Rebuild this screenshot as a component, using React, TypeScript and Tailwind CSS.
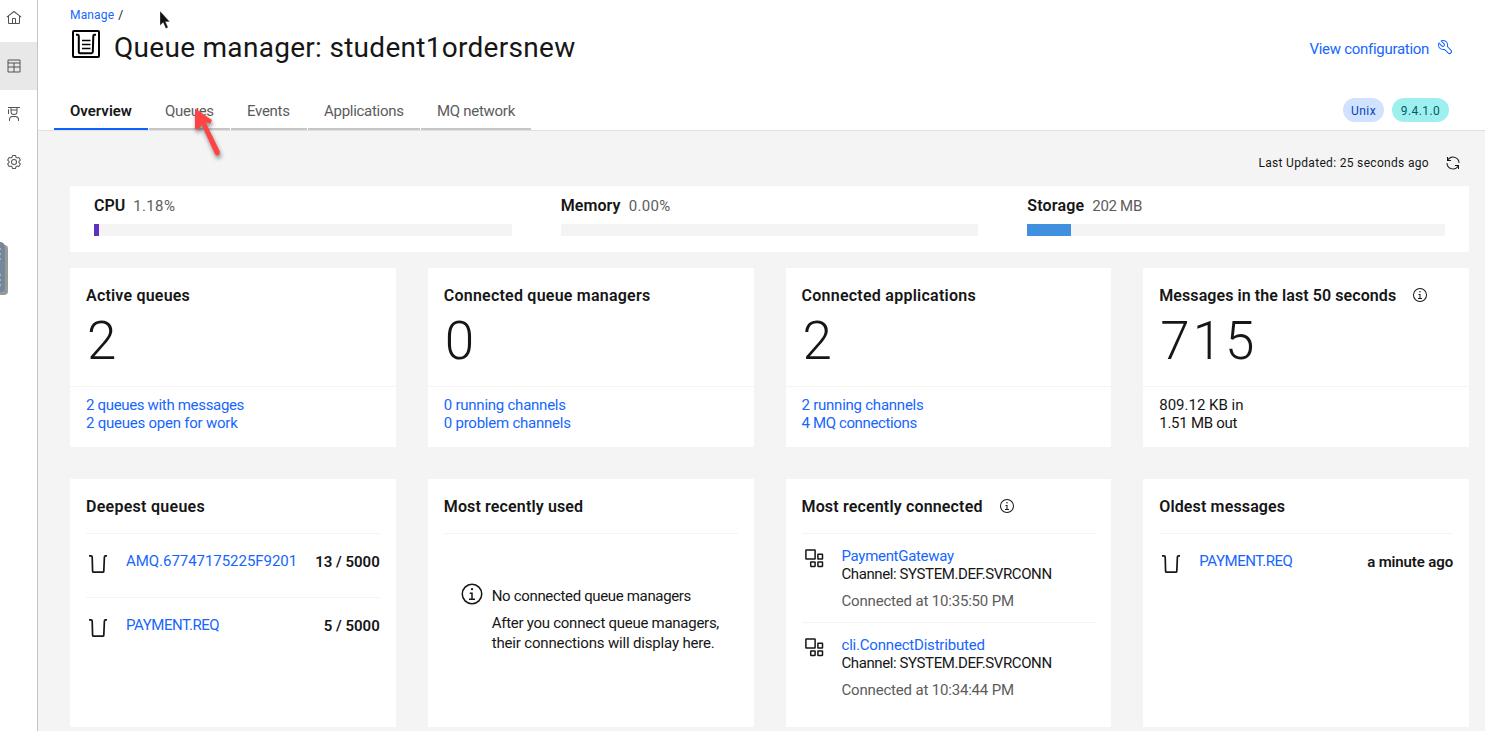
import type { ReactNode } from "react";

const link = "text-[#1666fe]";

function Carbon({ d, size = "size-4" }: { d: string[]; size?: string }) {
  return (
    <svg viewBox="0 0 32 32" fill="currentColor" className={`${size} shrink-0`}>
      {d.map((p) => (
        <path key={p} d={p} />
      ))}
    </svg>
  );
}

const HOME = [
  "M16.6123,2.2138a1.01,1.01,0,0,0-1.2427,0L1,13.4194l1.2427,1.5717L4,13.6208V26a2.0041,2.0041,0,0,0,2,2H26a2.0037,2.0037,0,0,0,2-2V13.63L29.7573,15,31,13.4282ZM18,26H14V18h4Zm2,0V18a2.0023,2.0023,0,0,0-2-2H14a2.002,2.002,0,0,0-2,2v8H6V12.0615l10-7.79,10,7.8005V26Z",
];
const TABLE = [
  "M27 3H5a2 2 0 0 0-2 2v22a2 2 0 0 0 2 2h22a2 2 0 0 0 2-2V5a2 2 0 0 0-2-2Zm0 2v4H5V5Zm-12 12H5v-6h10Zm2-6h10v6H17Zm-2 8v8H5v-8Zm2 8v-8h10v8Z",
];
const EDUCATION = [
  "M26,30H24V27a5.0059,5.0059,0,0,0-5-5H13a5.0059,5.0059,0,0,0-5,5v3H6V27a7.0082,7.0082,0,0,1,7-7h6a7.0082,7.0082,0,0,1,7,7Z",
  "M5,6A1,1,0,0,0,4,7v9H6V7A1,1,0,0,0,5,6Z",
  "M4,2V4H9v7a7,7,0,0,0,14,0V4h5V2Zm7,2H21V7H11Zm5,12a5,5,0,0,1-5-5V9H21v2A5,5,0,0,1,16,16Z",
];
const SETTINGS = [
  "M27,16.76c0-.25,0-.5,0-.76s0-.51,0-.77l1.92-1.68A2,2,0,0,0,29.3,11L26.94,7a2,2,0,0,0-1.73-1,2,2,0,0,0-.64.1l-2.43.82a11.35,11.35,0,0,0-1.31-.75l-.51-2.52a2,2,0,0,0-2-1.61H13.64a2,2,0,0,0-2,1.61l-.51,2.52a11.48,11.48,0,0,0-1.32.75L7.43,6.06A2,2,0,0,0,6.79,6,2,2,0,0,0,5.06,7L2.7,11a2,2,0,0,0,.41,2.51L5,15.24c0,.25,0,.5,0,.76s0,.51,0,.77L3.11,18.45A2,2,0,0,0,2.7,21L5.06,25a2,2,0,0,0,1.73,1,2,2,0,0,0,.64-.1l2.43-.82a11.35,11.35,0,0,0,1.31.75l.51,2.52a2,2,0,0,0,2,1.61h4.72a2,2,0,0,0,2-1.61l.51-2.52a11.48,11.48,0,0,0,1.32-.75l2.42.82a2,2,0,0,0,.64.1,2,2,0,0,0,1.73-1L29.3,21a2,2,0,0,0-.41-2.51ZM25.21,24l-3.43-1.16a8.86,8.86,0,0,1-2.71,1.57L18.36,28H13.64l-.71-3.55a9.36,9.36,0,0,1-2.7-1.57L6.79,24,4.43,20l2.72-2.4a8.9,8.9,0,0,1,0-3.13L4.43,12,6.79,8l3.43,1.16a8.86,8.86,0,0,1,2.71-1.57L13.64,4h4.72l.71,3.55a9.36,9.36,0,0,1,2.7,1.57L25.21,8,27.57,12l-2.72,2.4a8.9,8.9,0,0,1,0,3.13L27.57,20Z",
  "M16,22a6,6,0,1,1,6-6A5.94,5.94,0,0,1,16,22Zm0-10a3.91,3.91,0,0,0-4,4,3.91,3.91,0,0,0,4,4,3.91,3.91,0,0,0,4-4A3.91,3.91,0,0,0,16,12Z",
];
const TOOLS = [
  "M12.1,2A9.8,9.8,0,0,0,6.7,3.6L13.1,10a2.1,2.1,0,0,1,.2,3,2.1,2.1,0,0,1-3-.2L3.7,6.4A9.84,9.84,0,0,0,2,12.1,10.14,10.14,0,0,0,12.1,22.2a10.9,10.9,0,0,0,2.6-.3l6.7,6.7a5,5,0,0,0,7.1-7.1l-6.7-6.7a10.9,10.9,0,0,0,.3-2.6A10,10,0,0,0,12.1,2Zm8,10.1a7.61,7.61,0,0,1-.3,2.1l-.3,1.1.8.8,6.7,6.7a2.88,2.88,0,0,1,.9,2.1A2.72,2.72,0,0,1,27,27a2.9,2.9,0,0,1-4.2,0l-6.7-6.7-.8-.8-1.1.3a7.61,7.61,0,0,1-2.1.3,8.27,8.27,0,0,1-5.7-2.3A7.63,7.63,0,0,1,4,12.1a8.33,8.33,0,0,1,.3-2.2l4.4,4.4a4.14,4.14,0,0,0,5.9.2,4.14,4.14,0,0,0-.2-5.9L10,4.2a6.45,6.45,0,0,1,2-.3,8.27,8.27,0,0,1,5.7,2.3A8.49,8.49,0,0,1,20.1,12.1Z",
];
const RENEW = [
  "M12 10H6.78A11 11 0 0 1 27 16h2A13 13 0 0 0 6 7.68V4H4v8h8Z",
  "M20 22h5.22A11 11 0 0 1 5 16H3a13 13 0 0 0 23 8.32V28h2v-8h-8Z",
];
const INFO = [
  "M17 22V14H13v2h2v6H12v2h8V22Z",
  "M16 8a1.5 1.5 0 1 0 1.5 1.5A1.5 1.5 0 0 0 16 8Z",
  "M16,30A14,14,0,1,1,30,16,14,14,0,0,1,16,30ZM16,4A12,12,0,1,0,28,16,12,12,0,0,0,16,4Z",
];

function QueueIcon() {
  return (
    <svg viewBox="0 0 24 24" fill="none" stroke="#161616" strokeWidth="1.7" className="mt-[17px] size-6 shrink-0">
      <path d="M3 4.800h2q1.200 0 1.200 1.200l.4 14.200q0 1 1 1h9.200q1 0 1-1l.6-14.200q0-1.200 1.200-1.200h1.400" />
    </svg>
  );
}

function AppIcon() {
  return (
    <svg viewBox="0 0 24 24" fill="none" stroke="#161616" strokeWidth="1.500" className="mt-3 size-6 shrink-0">
      <rect x="3.900" y="3.900" width="9.200" height="9.200" rx=".3" />
      <rect x="15.900" y="8.300" width="4.600" height="4.800" rx=".3" />
      <rect x="8.700" y="16" width="4.400" height="4.400" rx=".3" />
      <rect x="15.900" y="16" width="4.600" height="4.400" rx=".3" />
    </svg>
  );
}

function Meter({ name, value, track, valueTrack, fill, color }: { name: string; value: string; track: string; valueTrack: string; fill: number; color: string }) {
  return (
    <div>
      <div className="flex h-[38px] items-center gap-2 pt-0.5 leading-5">
        <span className={`text-base font-semibold ${track}`}>{name}</span>
        <span className={`text-[15px] text-[#5c5c5c] ${valueTrack}`}>{value}</span>
      </div>
      <div className="h-3 bg-[#f4f4f4]">
        <div className={`h-3 ${color}`} style={{ width: fill }} />
      </div>
    </div>
  );
}

function CardTitle({ title, track, info }: { title: string; track: string; info?: boolean }) {
  return (
    <h2 className={`flex h-[23px] items-start text-base leading-[23px] font-semibold ${track}`}>
      {title}
      {info && <span className="mt-[3px] ml-4 flex"><Carbon d={INFO} /></span>}
    </h2>
  );
}

function Stat({ title, track, value, info, children }: { title: string; track: string; value: string; info?: boolean; children: ReactNode }) {
  return (
    <section className="h-[179px] bg-white">
      <div className="h-[118px] px-4 pt-4">
        <CardTitle title={title} track={track} info={info} />
        <p className="h-[68px] pl-px text-[53px] leading-[68px] font-light tracking-[3px]">{value}</p>
      </div>
      <div className="border-t border-[#f4f4f4] px-4 pt-[9px] text-[15px] leading-[18px]">{children}</div>
    </section>
  );
}

function Panel({ title, track, info, children }: { title: string; track: string; info?: boolean; children: ReactNode }) {
  return (
    <section className="h-[248px] bg-white px-4 pt-4">
      <CardTitle title={title} track={track} info={info} />
      <div className="mt-[15px]">{children}</div>
    </section>
  );
}

function QueueRow({ name, track, value, valueTrack = "" }: { name: string; track: string; value: string; valueTrack?: string }) {
  return (
    <div className="flex h-16 border-t border-[#f4f4f4]">
      <QueueIcon />
      <span className={`mt-[17px] ml-4 text-[15px] leading-5 ${link} ${track}`}>{name}</span>
      <span className={`mt-[18px] ml-auto text-[15px] leading-5 font-semibold ${valueTrack}`}>{value}</span>
    </div>
  );
}

function AppRow({ name, track, time }: { name: string; track: string; time: string }) {
  return (
    <div className="flex h-[89px] border-t border-[#f4f4f4]">
      <AppIcon />
      <div className="ml-4 pt-[13px] text-[15px] leading-[18px]">
        <p className={`${link} ${track}`}>{name}</p>
        <p className="tracking-[-0.4px]">Channel: SYSTEM.DEF.SVRCONN</p>
        <p className="mt-[9px] tracking-[-0.18px] text-[#5c5c5c]">Connected at {time}</p>
      </div>
    </div>
  );
}

function Tab({ label, width, active }: { label: string; width: string; active?: boolean }) {
  return (
    <div
      className={`flex h-[38px] items-center border-b-2 pt-0.5 pl-4 text-[15px] ${width} ${
        active ? "border-[#0f62fe] font-semibold" : "border-[#c6c6c6] tracking-[-0.28px] text-[#5c5c5c]"
      }`}
    >
      {label}
    </div>
  );
}

export default function App() {
  return (
    <div className="relative flex h-[731px] w-[1485px] overflow-hidden bg-white font-[Roboto,sans-serif] whitespace-nowrap text-[#161616]">
      <nav className="w-[38px] shrink-0 border-r border-[#c6c6c6] text-[#525252]">
        <div className="h-[42px] pt-[10px] pl-1.5"><Carbon d={HOME} /></div>
        <div className="flex h-12 items-center bg-[#e8e8e8] pl-1.5"><Carbon d={TABLE} /></div>
        <div className="flex h-12 items-center pl-1.5"><Carbon d={EDUCATION} /></div>
        <div className="flex h-12 items-center pl-1.5"><Carbon d={SETTINGS} /></div>
      </nav>

      <div className="flex grow flex-col">
        <header className="flex h-[131px] flex-col border-b border-[#e0e0e0]">
          <div className="flex h-[30px] items-center pl-8 text-xs tracking-[0.15px]">
            <span className={link}>Manage</span>
            <span className="ml-1">/</span>
          </div>
          <div className="flex h-[62px] items-start pr-8 pl-8">
            <svg viewBox="0 0 32 32" fill="none" stroke="#000" className="mt-[-2px] size-8">
              <rect x="3" y="3" width="26" height="26" rx="1" strokeWidth="2" />
              <path d="M6 6.800h1.500q1.300 0 1.300 1.300V24q0 1.200 1.200 1.200h11.500q1.200 0 1.300-1.200l.5-15.900q0-1.300 1.300-1.300H26" strokeWidth="2" />
              <path d="M12 12.500h8.500M12 16.500h8.500M12 20.500h8.500" strokeWidth="1.600" />
            </svg>
            <h1 className="ml-3 text-[28px] leading-[35px] tracking-[0.29px]">Queue manager: student1ordersnew</h1>
            <div className={`mt-[9px] ml-auto flex text-[15px] leading-5 ${link}`}>
              <span className="tracking-[-0.29px]">View configuration</span>
              <span className="ml-2"><Carbon d={TOOLS} /></span>
            </div>
          </div>
          <div className="flex h-[38px] gap-px pl-4">
            <Tab label="Overview" width="w-[94px]" active />
            <Tab label="Queues" width="w-[81px]" />
            <Tab label="Events" width="w-[76px]" />
            <Tab label="Applications" width="w-[112px]" />
            <Tab label="MQ network" width="w-[110px]" />
            <div className="mt-[6px] mr-9 ml-auto flex gap-2 text-xs tracking-[0.45px]">
              <span className="flex h-6 w-[41px] items-center justify-center rounded-full bg-[#d0e2ff] pt-0.5 text-[#0b3fb8]">Unix</span>
              <span className="flex h-6 w-[57px] items-center justify-center rounded-full bg-[#9ef0f0] pt-0.5 text-[#005d5d]">9.4.1.0</span>
            </div>
          </div>
        </header>

        <main className="grow bg-[#f4f4f4] pr-4 pl-8">
          <div className="flex h-[55px] items-center justify-end gap-4 pt-[9px] pr-2">
            <span className="text-xs tracking-[0.32px]">Last Updated: 25 seconds ago</span>
            <Carbon d={RENEW} />
          </div>

          <section className="grid h-[66px] grid-cols-3 gap-[49px] bg-white px-6">
            <Meter name="CPU" value="1.18%" track="" valueTrack="tracking-[0.35px]" fill={5} color="bg-[#6030c0]" />
            <Meter name="Memory" value="0.00%" track="tracking-[0.1px]" valueTrack="tracking-[0.35px]" fill={0} color="bg-[#4190e0]" />
            <Meter name="Storage" value="202 MB" track="tracking-[0.17px]" valueTrack="tracking-[-0.3px]" fill={44} color="bg-[#4190e0]" />
          </section>

          <div className="mt-4 grid grid-cols-4 gap-8">
            <Stat title="Active queues" track="tracking-[0.2px]" value="2">
              <p className={`tracking-[-0.33px] ${link}`}>2 queues with messages</p>
              <p className={`tracking-[-0.23px] ${link}`}>2 queues open for work</p>
            </Stat>
            <Stat title="Connected queue managers" track="tracking-[0.23px]" value="0">
              <p className={`tracking-[-0.24px] ${link}`}>0 running channels</p>
              <p className={`tracking-[-0.23px] ${link}`}>0 problem channels</p>
            </Stat>
            <Stat title="Connected applications" track="tracking-[0.25px]" value="2">
              <p className={`tracking-[-0.24px] ${link}`}>2 running channels</p>
              <p className={`tracking-[-0.37px] ${link}`}>4 MQ connections</p>
            </Stat>
            <Stat title="Messages in the last 50 seconds" track="tracking-[0.08px]" value="715" info>
              <p>809.12 KB in</p>
              <p className="tracking-[-0.26px]">1.51 MB out</p>
            </Stat>
            <Panel title="Deepest queues" track="tracking-[0.27px]">
              <QueueRow name="AMQ.67747175225F9201" track="tracking-[-0.04px]" value="13 / 5000" />
              <QueueRow name="PAYMENT.REQ" track="tracking-[-0.44px]" value="5 / 5000" />
            </Panel>
            <Panel title="Most recently used" track="tracking-[0.14px]">
              <div className="flex border-t border-[#f4f4f4] pt-12 pl-4">
                <Carbon d={INFO} size="size-6" />
                <div className="ml-2 pt-1 text-[15px] leading-5">
                  <p className="tracking-[-0.34px]">No connected queue managers</p>
                  <p className="mt-[7px] tracking-[-0.27px]">After you connect queue managers,</p>
                  <p className="tracking-[-0.17px]">their connections will display here.</p>
                </div>
              </div>
            </Panel>
            <Panel title="Most recently connected" track="tracking-[0.16px]" info>
              <AppRow name="PaymentGateway" track="tracking-[-0.3px]" time="10:35:50 PM" />
              <AppRow name="cli.ConnectDistributed" track="tracking-[-0.2px]" time="10:34:44 PM" />
            </Panel>
            <Panel title="Oldest messages" track="tracking-[0.14px]">
              <QueueRow name="PAYMENT.REQ" track="tracking-[-0.44px]" value="a minute ago" valueTrack="tracking-[-0.13px]" />
            </Panel>
          </div>
        </main>
      </div>

      <svg viewBox="0 0 8 54" className="absolute top-[242px] left-0 h-[54px] w-2">
        <path d="M0 3h4q4 0 4 4v42q0 4-4 4H0Z" fill="#999" />
        <path d="M0 0h1q4 1 4 5v41q0 4-4 4H0Z" fill="#74879b" />
        <path d="M0 7h1M0 12h1M0 17h1M0 33h1M0 38h1M0 43h1" stroke="#b4bfca" strokeWidth="1.500" />
      </svg>
      <svg viewBox="0 0 12 20" className="absolute top-[10px] left-[159px] h-5 w-3">
        <path d="M1 1v14.500l3.200-3 2.600 6 2.300-1-2.600-5.700h4.300Z" fill="#111" stroke="#fff" strokeWidth=".3" />
      </svg>
      <svg viewBox="0 0 36 60" className="absolute top-[103px] left-[190px] h-[60px] w-9 drop-shadow-[1px_3px_2px_rgba(0,0,0,0.45)]">
        <path d="M5 5.500 22 17l-1.500 3.500-5-1.200L29.800 48.500q.5 3.500-2.500 4-1.500 0-2.300-1.500L11.500 21.500 9 26H5Z" fill="#ff4242" />
      </svg>
    </div>
  );
}
